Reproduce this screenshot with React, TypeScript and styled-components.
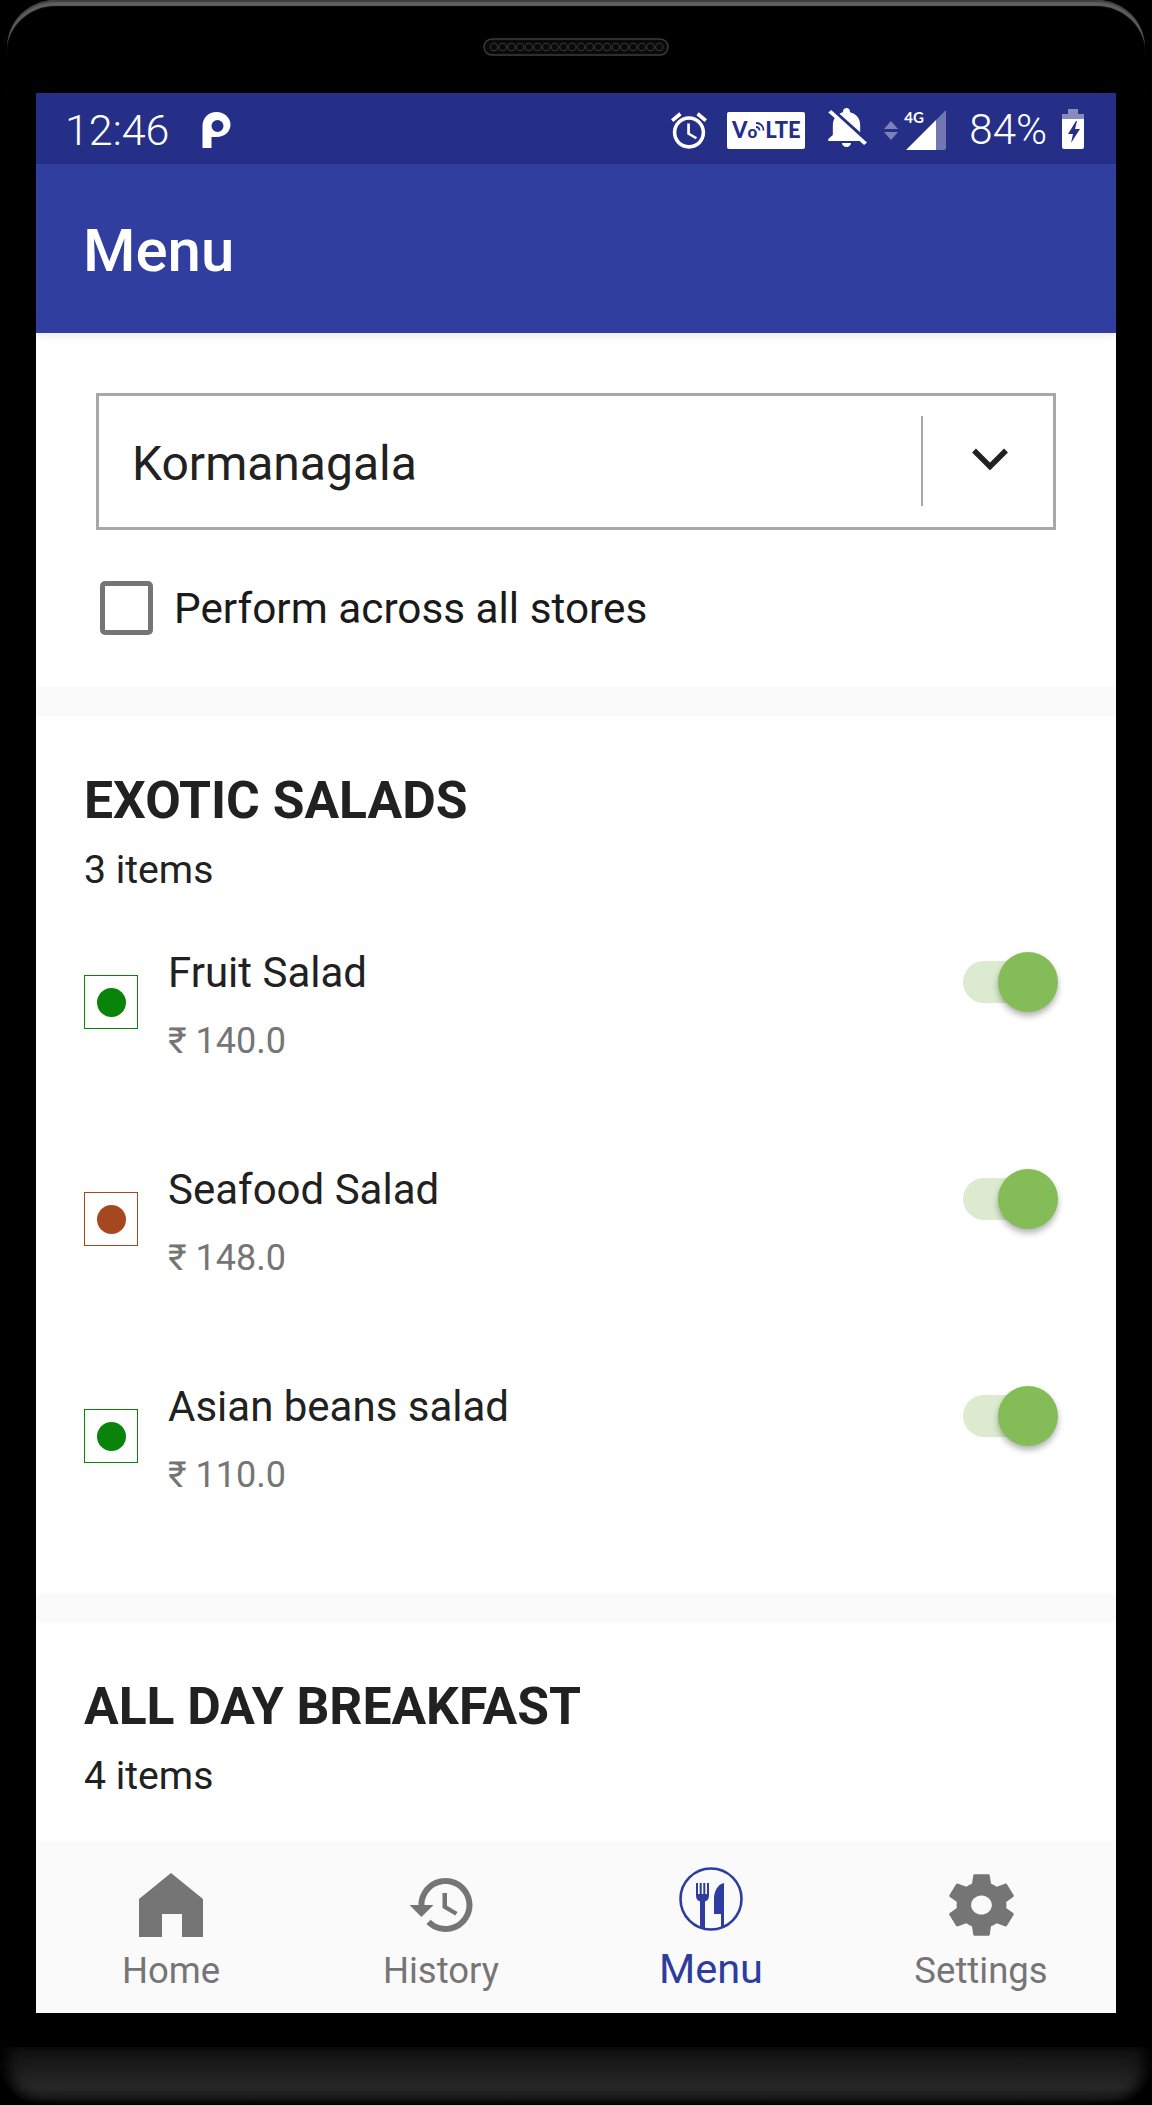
import React from "react";
import styled, { createGlobalStyle } from "styled-components";

const Global = createGlobalStyle`
  html, body { margin: 0; padding: 0; background: #000; }
  body { font-family: Roboto, "Noto Sans", sans-serif; color: #212121; }
  * { box-sizing: border-box; }
`;

const Phone = styled.div`
  width: 1152px;
  height: 2105px;
  background: #000;
  display: flex;
  flex-direction: column;
  overflow: hidden;
`;

const Earpiece = styled.div`
  height: 93px;
  margin: 0 7px;
  padding-top: 38px;
  display: flex;
  justify-content: center;
  align-items: flex-start;
  border-radius: 48px 48px 0 0;
  box-shadow: inset 0 3px 2px -1px #3a3a3a, inset 0 7px 1px -1px #626262;
  background: #000;
`;

const Screen = styled.div`
  width: 1080px;
  height: 1920px;
  margin: 0 36px;
  display: flex;
  flex-direction: column;
  background: #fafafa;
  flex: none;
`;

const Chin = styled.div`
  margin-top: 34px;
  height: 58px;
  border-radius: 0 0 44px 44px;
  background: linear-gradient(to bottom, #0f0f0f 0%, #1f1f1f 45%, #272727 70%, #1a1a1a 88%, #000 100%);
  box-shadow: inset 14px 0 14px -6px #000, inset -14px 0 14px -6px #000;
  flex: none;
`;

const StatusBar = styled.div`
  height: 71px;
  flex: none;
  background: #252f87;
  color: #fff;
  padding: 3px 32px 0 29px;
  display: flex;
  align-items: center;
`;

const Clock = styled.span`
  font-size: 43px;
  line-height: 48px;
  width: 137px;
  font-weight: 300;
`;

const StatusRight = styled.div`
  margin-left: auto;
  display: flex;
  align-items: center;
`;

const Battery = styled.span`
  font-size: 42px;
  line-height: 48px;
  margin: 0 15px 0 23px;
  font-weight: 300;
`;

const VoLte = styled.div`
  width: 78px;
  height: 37px;
  margin: 0 21px 0 20px;
  background: #fff;
  border-radius: 2px;
  display: flex;
  align-items: center;
  justify-content: center;
  color: #252f87;
  font-family: Lato, Roboto, sans-serif;
  font-weight: 900;
  font-size: 22px;
  line-height: 24px;
`;

const VoO = styled.span`
  font-size: 17px;
  margin: 4px -1px 0 0;
`;

const SignalBox = styled.div`
  position: relative;
  width: 40px;
  height: 40px;
  margin-left: 8px;
`;

const FourG = styled.span`
  position: absolute;
  left: -2px;
  top: 0;
  font-size: 15px;
  line-height: 14px;
  font-weight: 700;
  font-family: Lato, Roboto, sans-serif;
`;

const AppBar = styled.header`
  height: 169px;
  flex: none;
  background: #303f9f;
  color: #fff;
  padding: 52px 0 0 47px;
  font-size: 60px;
  line-height: 70px;
  font-weight: 500;
  position: relative;
  z-index: 1;
  box-shadow: 0 3px 8px rgba(0, 0, 0, 0.08);
`;

const Content = styled.main`
  flex: 1;
  min-height: 0;
  display: flex;
  flex-direction: column;
  gap: 28px;
  overflow: hidden;
`;

const StorePanel = styled.section`
  background: #fff;
  padding: 60px 60px 52px;
  margin-bottom: 1px;
`;

const Select = styled.div`
  height: 137px;
  border: 3px solid #a8a8a8;
  display: flex;
  align-items: center;
`;

const SelectLabel = styled.span`
  flex: 1;
  padding-left: 33px;
  font-size: 48px;
  line-height: 56px;
  font-weight: 450;
  margin-top: 4px;
`;

const SelectDivider = styled.div`
  width: 2px;
  height: 90px;
  background: #a8a8a8;
  margin-top: -1px;
`;

const Caret = styled.div`
  width: 130px;
  padding-left: 4px;
  display: flex;
  justify-content: center;
  margin-top: -6px;
`;

const CheckRow = styled.label`
  margin: 51px 0 0 4px;
  display: flex;
  align-items: center;
  gap: 21px;
`;

const CheckBox = styled.span`
  width: 53px;
  height: 54px;
  border: 5px solid #757575;
  border-radius: 5px;
  flex: none;
`;

const CheckText = styled.span`
  font-size: 42.300px;
  line-height: 50px;
  font-weight: 450;
  color: #1a1a1a;
  margin-top: 1px;
`;

const Category = styled.section<{ $fill?: boolean }>`
  background: #fff;
  padding: 55px 58px 97px 48px;
  ${(p) => (p.$fill ? "flex: 1;" : "")}
`;

const CategoryTitle = styled.h2`
  margin: 0;
  font-size: 51.600px;
  line-height: 60px;
  font-weight: 700;
`;

const CategoryCount = styled.p`
  margin: 16px 0 0;
  font-size: 39.200px;
  line-height: 46px;
`;

const ItemList = styled.div`
  margin-top: 55px;
  display: flex;
  flex-direction: column;
  gap: 102px;
`;

const ItemRow = styled.div`
  display: flex;
  align-items: flex-start;
  height: 115px;
`;

const DietMark = styled.span<{ $color: string }>`
  width: 54px;
  height: 54px;
  margin-top: 27px;
  flex: none;
  border: 1.5px solid ${(p) => p.$color};
  display: flex;
  align-items: center;
  justify-content: center;
  &::after {
    content: "";
    width: 29px;
    height: 29px;
    border-radius: 50%;
    background: ${(p) => p.$color};
  }
`;

const ItemInfo = styled.div`
  margin-left: 30px;
  flex: 1;
`;

const ItemName = styled.div`
  font-size: 42px;
  line-height: 50px;
  font-weight: 450;
`;

const ItemPrice = styled.div`
  margin-top: 21px;
  font-size: 36px;
  line-height: 44px;
  color: #757575;
`;

const Switch = styled.div`
  position: relative;
  width: 95px;
  height: 60px;
  margin-top: 4px;
  flex: none;
`;

const SwitchTrack = styled.div`
  width: 82px;
  height: 42px;
  margin-top: 9px;
  border-radius: 21px;
  background: #dcebcf;
`;

const SwitchThumb = styled.div`
  position: absolute;
  right: 0;
  top: 0;
  width: 60px;
  height: 60px;
  border-radius: 50%;
  background: #84bc58;
  box-shadow: 0 4px 6px rgba(0, 0, 0, 0.3);
`;

const TabBar = styled.nav`
  height: 170px;
  flex: none;
  background: #fafafa;
  display: flex;
  box-shadow: 0 -1px 3px rgba(0, 0, 0, 0.03);
  position: relative;
`;

const TabItem = styled.div<{ $active?: boolean }>`
  flex: 1;
  display: flex;
  flex-direction: column;
  align-items: center;
  padding-top: ${(p) => (p.$active ? 24 : 30)}px;
  color: ${(p) => (p.$active ? "#2d3c9e" : "#757575")};
`;

const TabIcon = styled.div`
  height: 64px;
  display: flex;
  align-items: center;
  justify-content: center;
`;

const TabLabel = styled.span<{ $active?: boolean }>`
  margin-top: ${(p) => (p.$active ? 16 : 12)}px;
  font-size: ${(p) => (p.$active ? 41.500 : 36.500)}px;
  line-height: 44px;
`;

const Speaker = () => (
  <svg width="186" height="18" viewBox="0 0 186 18">
    <rect x="1" y="1" width="184" height="16" rx="8" fill="#0a0a0a" stroke="#3c3c3c" strokeWidth="1.5" />
    {Array.from({ length: 20 }, (_, i) => (
      <circle key={i} cx={11 + i * 8.7} cy="9" r="3.7" fill="none" stroke="#363636" strokeWidth="1.1" />
    ))}
  </svg>
);

const PLogo = () => (
  <svg width="29" height="36" viewBox="0 0 28 36">
    <path
      fill="#fff"
      fillRule="evenodd"
      d="M0 14C0 6 6 0 14 0c8 0 14 6 14 12.500C28 20 22 25 14 25H9v11H0zM15 8a6 6 0 1 0 0 12 6 6 0 0 0 0-12z"
    />
  </svg>
);

const AlarmIcon = () => (
  <svg width="36" height="37" viewBox="2 1.86 20 20.14" fill="#fff">
    <path d="M22 5.720l-4.600-3.860-1.290 1.530 4.600 3.860L22 5.720zM7.880 3.390L6.600 1.860 2 5.710l1.290 1.530 4.590-3.850zM12.500 8H11v6l4.750 2.850.75-1.230-4-2.370V8zM12 4c-4.970 0-9 4.030-9 9s4.020 9 9 9c4.970 0 9-4.030 9-9s-4.030-9-9-9zm0 16c-3.870 0-7-3.130-7-7s3.130-7 7-7 7 3.130 7 7-3.130 7-7 7z" />
  </svg>
);

const WaveIcon = () => (
  <svg width="9" height="12" viewBox="0 0 9 12" fill="none" stroke="#252f87" strokeWidth="1.9" style={{ marginTop: -8 }}>
    <path d="M0 7c2 0 3.500 1.500 3.500 3.500M0 3c4.500 0 7.500 3 7.500 7.500" />
  </svg>
);

const BellOffIcon = () => (
  <svg width="41" height="39" viewBox="3 2.500 18 19.500" fill="#fff" preserveAspectRatio="none" style={{ marginTop: -5 }}>
    <path d="M20 18.690L7.840 6.140 5.270 3.490 4 4.760l2.800 2.800v.01c-.52.99-.8 2.160-.8 3.420v5l-2 2v1h13.730l2 2L21 19.720l-1-1.030zM12 22c1.110 0 2-.89 2-2h-4c0 1.110.89 2 2 2zm6-7.320V11c0-3.080-1.640-5.640-4.500-6.320V4c0-.83-.67-1.500-1.500-1.500s-1.500.67-1.500 1.500v.68c-.15.03-.29.08-.42.12-.1.03-.2.07-.3.11h-.01c-.2.08-.4.18-.59.28-.1.05-.2.1-.29.17L18 14.680z" />
  </svg>
);

const DataArrows = () => (
  <svg width="14" height="19" viewBox="0 0 14 19" fill="#fff" fillOpacity="0.4" style={{ marginLeft: 17 }}>
    <path d="M7 0l7 8H0zM0 11h14l-7 8z" />
  </svg>
);

const SignalIcon = () => (
  <svg width="40" height="40" viewBox="0 0 40 40">
    <path d="M0 40L30 10v30z" fill="#fff" />
    <path d="M30 10L40 0v38a2 2 0 0 1-2 2h-8z" fill="#fff" fillOpacity="0.35" />
  </svg>
);

const BatteryIcon = () => (
  <svg width="22" height="40" viewBox="0 0 22 40" style={{ marginTop: -3 }}>
    <path d="M6 0h10v5H6zM0 5h22v5H0z" fill="#fff" fillOpacity="0.45" />
    <path d="M0 10h22v28a2 2 0 0 1-2 2H2a2 2 0 0 1-2-2z" fill="#fff" />
    <path d="M14 12L6 25h5l-2 9 9-14h-5l2-8z" fill="#252f87" />
  </svg>
);

const ChevronIcon = () => (
  <svg width="36" height="22" viewBox="0 0 36 22" fill="none" stroke="#212121" strokeWidth="5.500">
    <path d="M2 2.500L18 18.500 34 2.500" />
  </svg>
);

const HomeIcon = () => (
  <svg width="64" height="64" viewBox="0 0 64 64" fill="currentColor">
    <path d="M32 0l32 26v38H43V41H23v23H0V26z" />
  </svg>
);

const HistoryIcon = () => (
  <svg width="64" height="54" viewBox="1 3 21 18" fill="currentColor">
    <path d="M13 3c-4.970 0-9 4.030-9 9H1l3.890 3.890.07.14L9 12H6c0-3.870 3.130-7 7-7s7 3.130 7 7-3.130 7-7 7c-1.930 0-3.680-.79-4.940-2.060l-1.420 1.420C8.270 19.990 10.510 21 13 21c4.970 0 9-4.030 9-9s-4.030-9-9-9zm-1 5v5l4.280 2.540.72-1.210-3.500-2.080V8H12z" />
  </svg>
);

const CutleryIcon = () => (
  <svg width="64" height="64" viewBox="0 0 64 64" fill="currentColor">
    <circle cx="32" cy="32" r="30.500" fill="none" stroke="currentColor" strokeWidth="2.600" />
    <path d="M17 16h2v11h1.700V16h2v11h1.600V16h2v11H28V16h2v13c0 3-2 5-4 5.500V62h-5V34.500c-2-.5-4-2.500-4-5.500z" />
    <path d="M45 16v44h-3V47h-7V32c0-8 4-15 10-16z" />
  </svg>
);

const SettingsIcon = () => (
  <svg width="65" height="64" viewBox="2.600 2 18.800 20" fill="currentColor" preserveAspectRatio="none">
    <path
      fillRule="evenodd"
      d="M19.140 12.940c.04-.3.06-.61.06-.94 0-.32-.02-.64-.07-.94l2.030-1.580c.18-.14.23-.41.12-.61l-1.920-3.320c-.12-.22-.37-.29-.59-.22l-2.390.96c-.5-.38-1.030-.7-1.620-.94l-.36-2.540c-.04-.24-.24-.41-.48-.41h-3.840c-.24 0-.43.17-.47.41l-.36 2.540c-.59.24-1.130.57-1.620.94l-2.390-.96c-.22-.08-.47 0-.59.22L2.740 8.870c-.12.21-.08.47.12.61l2.030 1.580c-.05.3-.09.63-.09.94s.02.64.07.94l-2.030 1.580c-.18.14-.23.41-.12.61l1.920 3.320c.12.22.37.29.59.22l2.390-.96c.5.38 1.030.7 1.620.94l.36 2.540c.05.24.24.41.48.41h3.840c.24 0 .44-.17.47-.41l.36-2.540c.59-.24 1.130-.56 1.620-.94l2.390.96c.22.08.47 0 .59-.22l1.920-3.320c.12-.22.07-.47-.12-.61l-2.010-1.580zM12 15c-1.650 0-3-1.350-3-3s1.350-3 3-3 3 1.350 3 3-1.350 3-3 3z"
    />
  </svg>
);

const VEG = "#0a830a";
const NONVEG = "#a5481f";

const items = [
  { name: "Fruit Salad", price: "₹ 140.0", color: VEG },
  { name: "Seafood Salad", price: "₹ 148.0", color: NONVEG },
  { name: "Asian beans salad", price: "₹ 110.0", color: VEG },
];

const tabs = [
  { label: "Home", icon: <HomeIcon /> },
  { label: "History", icon: <HistoryIcon /> },
  { label: "Menu", icon: <CutleryIcon />, active: true },
  { label: "Settings", icon: <SettingsIcon /> },
];

export default function App() {
  return (
    <Phone>
      <Global />
      <Earpiece>
        <Speaker />
      </Earpiece>
      <Screen>
        <StatusBar>
          <Clock>12:46</Clock>
          <PLogo />
          <StatusRight>
            <AlarmIcon />
            <VoLte>
              V<VoO>o</VoO>
              <WaveIcon />
              LTE
            </VoLte>
            <BellOffIcon />
            <DataArrows />
            <SignalBox>
              <SignalIcon />
              <FourG>4G</FourG>
            </SignalBox>
            <Battery>84%</Battery>
            <BatteryIcon />
          </StatusRight>
        </StatusBar>
        <AppBar>Menu</AppBar>
        <Content>
          <StorePanel>
            <Select>
              <SelectLabel>Kormanagala</SelectLabel>
              <SelectDivider />
              <Caret>
                <ChevronIcon />
              </Caret>
            </Select>
            <CheckRow>
              <CheckBox />
              <CheckText>Perform across all stores</CheckText>
            </CheckRow>
          </StorePanel>
          <Category>
            <CategoryTitle>EXOTIC SALADS</CategoryTitle>
            <CategoryCount>3 items</CategoryCount>
            <ItemList>
              {items.map((item) => (
                <ItemRow key={item.name}>
                  <DietMark $color={item.color} />
                  <ItemInfo>
                    <ItemName>{item.name}</ItemName>
                    <ItemPrice>{item.price}</ItemPrice>
                  </ItemInfo>
                  <Switch>
                    <SwitchTrack />
                    <SwitchThumb />
                  </Switch>
                </ItemRow>
              ))}
            </ItemList>
          </Category>
          <Category $fill>
            <CategoryTitle>ALL DAY BREAKFAST</CategoryTitle>
            <CategoryCount>4 items</CategoryCount>
          </Category>
        </Content>
        <TabBar>
          {tabs.map((tab) => (
            <TabItem key={tab.label} $active={tab.active}>
              <TabIcon>{tab.icon}</TabIcon>
              <TabLabel $active={tab.active}>{tab.label}</TabLabel>
            </TabItem>
          ))}
        </TabBar>
      </Screen>
      <Chin />
    </Phone>
  );
}
